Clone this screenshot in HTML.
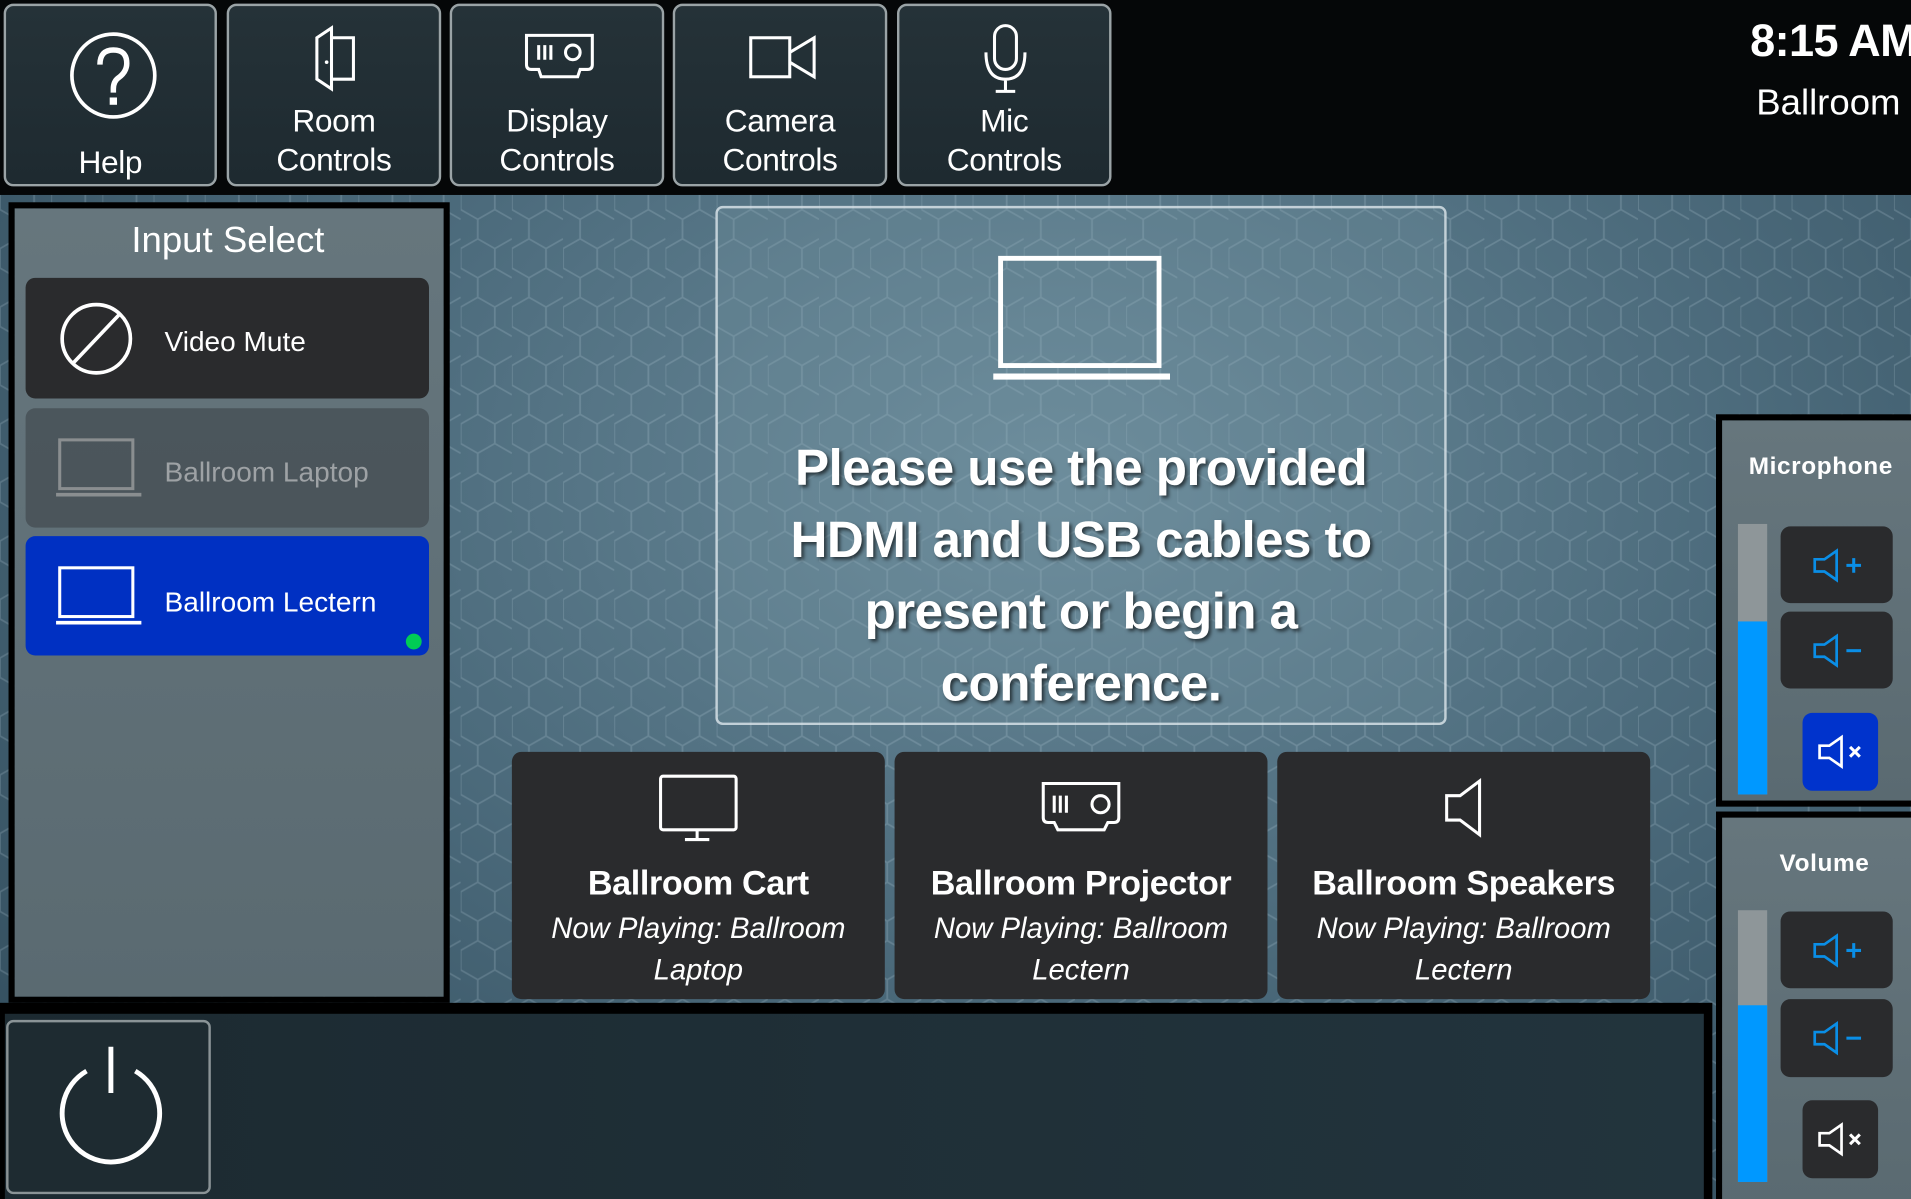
<!DOCTYPE html>
<html><head><meta charset="utf-8"><style>
html,body{margin:0;padding:0;width:1911px;height:1199px;overflow:hidden;background:#000}
#s{position:absolute;left:0;top:0;width:1568px;height:984px;transform:scale(1.21875,1.2185);transform-origin:0 0;overflow:hidden;
font-family:"Liberation Sans Narrow","Liberation Sans",sans-serif;color:#fff;
background:radial-gradient(ellipse at 55% 40%,#6a8a9a 0%,#4d6c7d 45%,#2f4a5a 100%)}
.a{position:absolute;box-sizing:border-box}
.tb{background:linear-gradient(#253238,#1e2a30);border:2px solid #9aa3a6;border-radius:8px;text-align:center;font-size:26px;line-height:32px;letter-spacing:-.3px}
.dk{background:#2a2b2d;border-radius:8px}
.c{text-align:center}
svg{position:absolute;overflow:visible}
.panel{background:linear-gradient(#66767d,#5a6a71);border:5px solid #000}
</style></head><body><div id="s">
<svg width="1568" height="984" style="left:0;top:0;opacity:.18"><defs><pattern id="h" width="42" height="48" patternUnits="userSpaceOnUse"><path d="M0 12 L14 4 L28 12 L28 28 L14 36 L0 28 Z M28 12 L42 4 M28 28 L42 36 M14 36 L14 52 M14 4 L14 -12" fill="none" stroke="#cfe3ee" stroke-width="1.5"/></pattern></defs><rect width="1568" height="984" fill="url(#h)"/></svg>
<div class="a" style="left:0;top:0;width:1568px;height:160px;background:#050708"></div>
<div class="a" style="left:0;top:823px;width:1405px;height:161px;background:#000"></div>
<div class="a" style="left:4px;top:832px;width:1394px;height:152px;background:linear-gradient(90deg,#1c2a31,#22343d)"></div>
<div class="a tb" style="left:3px;top:3px;width:175px;height:150px"><div style="position:absolute;left:0;right:0;top:112px">Help</div>
<svg style="left:52px;top:21px" width="72" height="72"><circle cx="36" cy="36" r="34" fill="none" stroke="#fff" stroke-width="3"/><path d="M25 27 Q25 15 36 15 Q47 15 47 26 Q47 33 40 38 Q36 41 36 47 L36 50" fill="none" stroke="#fff" stroke-width="4.5"/><rect x="33" y="54" width="6" height="6" fill="#fff"/></svg></div>
<div class="a tb" style="left:186px;top:3px;width:176px;height:150px"><div style="position:absolute;left:0;right:0;top:78px">Room<br>Controls</div>
<svg style="left:70px;top:16px" width="36" height="54"><path d="M2 10 L14 2 L14 52 L2 44 Z M14 10 L32 10 L32 44 L14 44" fill="none" stroke="#fff" stroke-width="2.5"/><circle cx="10" cy="30" r="1.5" fill="#fff"/></svg></div>
<div class="a tb" style="left:369px;top:3px;width:176px;height:150px"><div style="position:absolute;left:0;right:0;top:78px">Display<br>Controls</div>
<svg style="left:57px;top:22px" width="62" height="40"><path d="M4 2 H58 V26 Q58 30 54 30 L48 30 L46 36 H16 L14 30 H8 Q4 30 4 26 Z" fill="none" stroke="#fff" stroke-width="2.5"/><path d="M14 10 V22 M19 10 V22 M24 10 V22" stroke="#fff" stroke-width="2.5"/><circle cx="42" cy="16" r="6" fill="none" stroke="#fff" stroke-width="2.5"/></svg></div>
<div class="a tb" style="left:552px;top:3px;width:176px;height:150px"><div style="position:absolute;left:0;right:0;top:78px">Camera<br>Controls</div>
<svg style="left:60px;top:24px" width="60" height="36"><rect x="2" y="2" width="32" height="32" fill="none" stroke="#fff" stroke-width="2.5"/><path d="M34 14 L54 2 L54 34 L34 22" fill="none" stroke="#fff" stroke-width="2.5"/></svg></div>
<div class="a tb" style="left:736px;top:3px;width:176px;height:150px"><div style="position:absolute;left:0;right:0;top:78px">Mic<br>Controls</div>
<svg style="left:68px;top:14px" width="40" height="58"><rect x="10" y="2" width="18" height="36" rx="9" fill="none" stroke="#fff" stroke-width="2.5"/><path d="M3 24 Q3 46 19 46 Q35 46 35 24 M19 46 V56 M11 56 H27" fill="none" stroke="#fff" stroke-width="2.5"/></svg></div>
<div class="a" style="left:1436px;top:12px;font-size:37px;font-weight:bold;line-height:44px;white-space:nowrap;letter-spacing:-.5px">8:15 AM</div>
<div class="a" style="left:1441px;top:68px;font-size:30px;white-space:nowrap">Ballroom</div>

<div class="a panel" style="left:7px;top:166px;width:362px;height:657px"></div>
<div class="a c" style="left:12px;top:181px;width:350px;font-size:30px">Input Select</div>
<div class="a dk" style="left:21px;top:228px;width:331px;height:99px"><svg style="left:29px;top:21px" width="58" height="58"><circle cx="29" cy="29" r="28" fill="none" stroke="#fff" stroke-width="3"/><path d="M10 49 L48 9" stroke="#fff" stroke-width="3"/></svg><div class="a" style="left:114px;top:39px;font-size:23px">Video Mute</div></div>
<div class="a" style="left:21px;top:335px;width:331px;height:98px;background:rgba(60,66,72,.6);border-radius:8px"><svg style="left:25px;top:24px" width="70" height="50"><rect x="3" y="2" width="60" height="40" fill="none" stroke="#8a8e90" stroke-width="2.5"/><path d="M0 47 H70" stroke="#8a8e90" stroke-width="3"/></svg><div class="a" style="left:114px;top:39px;font-size:23px;color:#9ea2a5">Ballroom Laptop</div></div>
<div class="a" style="left:21px;top:440px;width:331px;height:98px;background:#0030c2;border-radius:8px"><svg style="left:25px;top:24px" width="70" height="50"><rect x="3" y="2" width="60" height="40" fill="none" stroke="#fff" stroke-width="2.5"/><path d="M0 47 H70" stroke="#fff" stroke-width="3"/></svg><div class="a" style="left:114px;top:41px;font-size:23px">Ballroom Lectern</div><div class="a" style="left:312px;top:80px;width:13px;height:13px;border-radius:50%;background:#00cc55"></div></div>

<div class="a" style="left:587px;top:169px;width:600px;height:426px;border:2px solid rgba(220,230,235,.8);border-radius:6px;background:rgba(120,150,165,.25)"></div>
<svg style="left:815px;top:210px" width="146" height="104"><rect x="6" y="2" width="130" height="88" fill="none" stroke="#fff" stroke-width="4"/><path d="M0 99 H145" stroke="#fff" stroke-width="5"/></svg>
<div class="a c" style="left:560px;top:354px;width:654px;font-size:42px;font-weight:bold;line-height:59px;letter-spacing:-.5px;white-space:nowrap;text-shadow:2px 2px 3px rgba(0,0,0,.6)">Please use the provided<br>HDMI and USB cables to<br>present or begin a<br>conference.</div>

<div class="a dk" style="left:420px;top:617px;width:306px;height:203px"><svg style="left:120px;top:18px" width="66" height="56"><rect x="2" y="2" width="62" height="44" rx="2" fill="none" stroke="#fff" stroke-width="2.5"/><path d="M32 46 V54 M22 54 H42" stroke="#fff" stroke-width="2.5"/></svg></div>
<div class="a dk" style="left:734px;top:617px;width:306px;height:203px"><svg style="left:119px;top:24px" width="68" height="42"><path d="M3 2 H65 V30 Q65 34 61 34 L56 34 L53 40 H15 L12 34 H7 Q3 34 3 30 Z" fill="none" stroke="#fff" stroke-width="2.5"/><path d="M12 12 V26 M17 12 V26 M22 12 V26" stroke="#fff" stroke-width="2.5"/><circle cx="50" cy="19" r="7" fill="none" stroke="#fff" stroke-width="2.5"/></svg></div>
<div class="a dk" style="left:1048px;top:617px;width:306px;height:203px"><svg style="left:136px;top:22px" width="34" height="48"><path d="M3 14 H14 L30 2 V46 L14 34 H3 Z" fill="none" stroke="#fff" stroke-width="2.5"/></svg></div>
<div class="a c" style="left:420px;top:709px;width:306px;font-size:28px;font-weight:bold;letter-spacing:-.3px">Ballroom Cart</div>
<div class="a c" style="left:734px;top:709px;width:306px;font-size:28px;font-weight:bold;letter-spacing:-.3px">Ballroom Projector</div>
<div class="a c" style="left:1048px;top:709px;width:306px;font-size:28px;font-weight:bold;letter-spacing:-.3px">Ballroom Speakers</div>
<div class="a c" style="left:420px;top:746px;width:306px;font-size:24px;font-style:italic;line-height:34px">Now Playing: Ballroom<br>Laptop</div>
<div class="a c" style="left:734px;top:746px;width:306px;font-size:24px;font-style:italic;line-height:34px">Now Playing: Ballroom<br>Lectern</div>
<div class="a c" style="left:1048px;top:746px;width:306px;font-size:24px;font-style:italic;line-height:34px">Now Playing: Ballroom<br>Lectern</div>

<div class="a" style="left:5px;top:837px;width:168px;height:143px;border:2px solid #8a9396;border-radius:6px;background:#1e2b31"><svg style="left:38px;top:20px" width="92" height="96"><path d="M26 20 A40 40 0 1 0 66 20" fill="none" stroke="#fff" stroke-width="4"/><path d="M46 0 V38" stroke="#fff" stroke-width="4"/></svg></div>

<div class="a panel" style="left:1408px;top:340px;width:170px;height:322px"></div>
<div class="a panel" style="left:1408px;top:666px;width:170px;height:330px"></div>
<div class="a" style="left:1410px;top:372px;width:168px;font-size:20px;font-weight:bold;text-align:center;font-family:'Liberation Sans',sans-serif;letter-spacing:.5px">Microphone</div>
<div class="a" style="left:1420px;top:698px;width:154px;font-size:20px;font-weight:bold;text-align:center;font-family:'Liberation Sans',sans-serif;letter-spacing:.5px">Volume</div>
<div class="a" style="left:1426px;top:430px;width:24px;height:222px;background:#8e9699"><div class="a" style="left:0;top:80px;width:24px;height:142px;background:#0098ff"></div></div>
<div class="a" style="left:1426px;top:747px;width:24px;height:223px;background:#8e9699"><div class="a" style="left:0;top:78px;width:24px;height:145px;background:#0098ff"></div></div>

<div class="a dk" style="left:1461px;top:432px;width:92px;height:63px"><svg style="left:26px;top:18px" width="44" height="28"><path d="M2 9 H10 L20 2 V26 L10 19 H2 Z" fill="none" stroke="#0a8ee6" stroke-width="2.2"/><path d="M28 14 H40 M34 8 V20" stroke="#0a8ee6" stroke-width="2.5"/></svg></div>
<div class="a dk" style="left:1461px;top:502px;width:92px;height:63px"><svg style="left:26px;top:18px" width="44" height="28"><path d="M2 9 H10 L20 2 V26 L10 19 H2 Z" fill="none" stroke="#0a8ee6" stroke-width="2.2"/><path d="M28 14 H40" stroke="#0a8ee6" stroke-width="2.5"/></svg></div>
<div class="a" style="left:1479px;top:585px;width:62px;height:64px;background:#0033cc;border-radius:8px"><svg style="left:12px;top:18px" width="40" height="28"><path d="M2 9 H10 L20 2 V26 L10 19 H2 Z" fill="none" stroke="#fff" stroke-width="2.2"/><path d="M27 10 L35 18 M35 10 L27 18" stroke="#fff" stroke-width="2.5"/></svg></div>
<div class="a dk" style="left:1461px;top:748px;width:92px;height:63px"><svg style="left:26px;top:18px" width="44" height="28"><path d="M2 9 H10 L20 2 V26 L10 19 H2 Z" fill="none" stroke="#0a8ee6" stroke-width="2.2"/><path d="M28 14 H40 M34 8 V20" stroke="#0a8ee6" stroke-width="2.5"/></svg></div>
<div class="a dk" style="left:1461px;top:820px;width:92px;height:64px"><svg style="left:26px;top:18px" width="44" height="28"><path d="M2 9 H10 L20 2 V26 L10 19 H2 Z" fill="none" stroke="#0a8ee6" stroke-width="2.2"/><path d="M28 14 H40" stroke="#0a8ee6" stroke-width="2.5"/></svg></div>
<div class="a dk" style="left:1479px;top:903px;width:62px;height:64px"><svg style="left:12px;top:18px" width="40" height="28"><path d="M2 9 H10 L20 2 V26 L10 19 H2 Z" fill="none" stroke="#fff" stroke-width="2.2"/><path d="M27 10 L35 18 M35 10 L27 18" stroke="#fff" stroke-width="2.5"/></svg></div>
</div></body></html>
